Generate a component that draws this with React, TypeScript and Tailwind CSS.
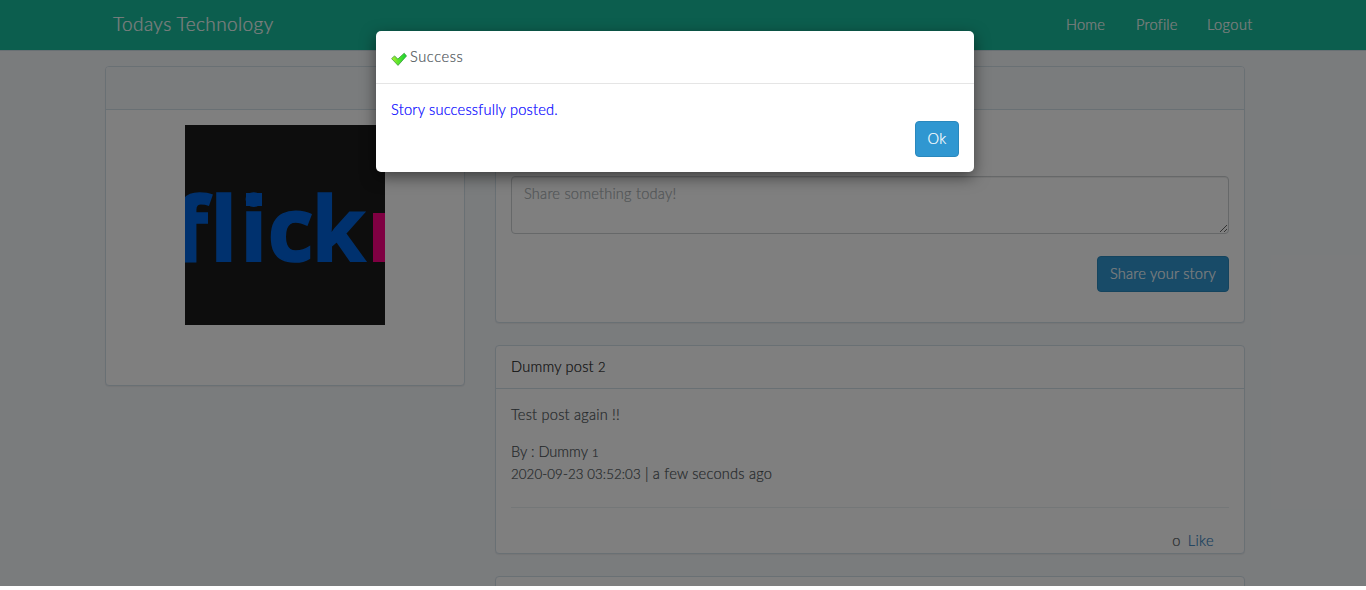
import React from "react";

function Panel({ className, children }: { className: string; children?: React.ReactNode }) {
  return (
    <section
      className={
        "box-border flex flex-col rounded-[4px] border border-[#d3e0e9] bg-white shadow-[0_1px_1px_rgba(0,0,0,0.05)] " +
        className
      }
    >
      {children}
    </section>
  );
}

function FlickrPicture() {
  return (
    <svg
      width="200"
      height="200"
      viewBox="0 0 200 200"
      className="block"
      fontFamily="'Open Sans', sans-serif"
      fontWeight="700"
      fontSize="90"
      letterSpacing="0"
      fill="#0063dc"
      stroke="#0063dc"
      strokeWidth="1.6"
    >
      <rect width="200" height="200" fill="#1b1b1b" stroke="none" />
      <text x="-12" y="136.4">f</text>
      <text x="25" y="136.4">l</text>
      <text x="55" y="136.4">i</text>
      <rect x="61" y="68" width="16" height="13" stroke="none" />
      <text x="82.5" y="136.4">c</text>
      <text x="126.5" y="136.4" textLength="54" lengthAdjust="spacingAndGlyphs">k</text>
      <rect x="188" y="88" width="12" height="49" fill="#ff0084" stroke="none" />
    </svg>
  );
}

function CheckIcon() {
  return (
    <svg width="16" height="16" viewBox="0 0 16 16" className="mt-[1px] block">
      <defs>
        <linearGradient id="tick" x1="0" y1="0" x2="1" y2="0">
          <stop offset="0" stopColor="#b4f02c" />
          <stop offset="0.4" stopColor="#62e52c" />
          <stop offset="1" stopColor="#10d530" />
        </linearGradient>
      </defs>
      <path
        d="M0.6 7.6 3.6 4.9l3.2 3.2L13.2 2.2l2.3 2.8-8.5 9.4Z"
        fill="url(#tick)"
        stroke="#3c9c3c"
        strokeWidth="0.8"
        strokeLinejoin="round"
      />
    </svg>
  );
}

export default function App() {
  return (
    <div className="relative h-[590px] w-full overflow-hidden bg-white font-['Lato',sans-serif] text-[14.6px] leading-[22px] font-light tracking-[0.22px] text-[#4c5357] [-webkit-text-stroke:0.2px]">
      <div className="h-[586px] overflow-hidden bg-[#f5f8fa]">
        <nav className="h-[51px] border-b border-[#d3e0e9] bg-[#18bc9c] text-white">
          <div className="ml-[113px] flex h-[50px] w-[1140px] items-center justify-between">
            <span className="pb-[2px] text-[19px] tracking-[0.4px]">Todays Technology</span>
            <div className="flex gap-[30px]">
              <span className="w-[40px]">Home</span>
              <span className="w-[41px]">Profile</span>
              <span className="w-[46px] tracking-[0.4px]">Logout</span>
            </div>
          </div>
        </nav>
        <div className="ml-[105px] mt-[15px] flex w-[1140px] items-start gap-[30px]">
          <Panel className="h-[320px] w-[360px]">
            <div className="h-[43px] rounded-t-[3px] border-b border-[#d3e0e9] bg-[#f5f8fa]" />
            <div className="flex justify-center pt-[15px]">
              <FlickrPicture />
            </div>
          </Panel>
          <div className="flex w-[750px] flex-col gap-[22px]">
            <Panel className="h-[257px]">
              <div className="h-[43px] shrink-0 rounded-t-[3px] border-b border-[#d3e0e9] bg-[#f5f8fa]" />
              <div className="flex flex-col items-end px-[15px] pt-[66px]">
                <textarea
                  readOnly
                  placeholder="Share something today!"
                  className="box-border block h-[58px] w-full resize-y rounded-[4px] border border-[#ccd0d2] bg-white px-[12px] py-[6px] shadow-[inset_0_1px_1px_rgba(0,0,0,0.075)] placeholder:text-[#a5acaf]"
                />
                <button className="mt-[22px] h-[36px] w-[132px] rounded-[4px] border border-[#2a88bd] bg-[#3097d1] text-white">
                  Share your story
                </button>
              </div>
            </Panel>
            <Panel className="h-[209px]">
              <div className="h-[43px] shrink-0 border-b border-[#d3e0e9] px-[15px] pt-[10px] text-[#222222]">
                Dummy post <span className="text-[13px] leading-none">2</span>
              </div>
              <div className="px-[15px] pt-[15px]">
                <p>Test post again !!</p>
                <p className="mt-[15px] tracking-normal">
                  By : Dummy <span className="text-[12px] leading-none">1</span>
                </p>
                <p className="flex h-[22px] items-baseline whitespace-pre">
                  <span className="text-[13.3px] leading-none tracking-[0.1px]">2020-09-23 03:52:03</span>
                  <span> | a few seconds ago</span>
                </p>
                <hr className="mt-[22px] border-[#e9eef0]" />
                <div className="mt-[22px] flex justify-end gap-[7px] pr-[15px]">
                  <span>o</span>
                  <span className="tracking-[0.4px] text-[#3080bd]">Like</span>
                </div>
              </div>
            </Panel>
            <Panel className="h-[120px]" />
          </div>
        </div>
      </div>
      <div className="absolute inset-x-0 top-0 flex h-[586px] items-start bg-black/50">
        <div
          role="dialog"
          className="ml-[376px] mt-[31px] flex h-[141px] w-[598px] flex-col rounded-[5px] bg-white shadow-[0_5px_15px_rgba(0,0,0,0.5)]"
        >
          <div className="flex h-[53px] gap-[3px] border-b border-[#e5e5e5] px-[15px] pt-[15px]">
            <div className="pt-[4px]">
              <CheckIcon />
            </div>
            <span className="tracking-[0.6px]">Success</span>
          </div>
          <div className="flex flex-col px-[15px] pt-[15px]">
            <p className="text-[#0000ff]">Story successfully posted.</p>
            <button className="h-[36px] w-[44px] self-end rounded-[4px] border border-[#2a88bd] bg-[#3097d1] text-white">
              Ok
            </button>
          </div>
        </div>
      </div>
    </div>
  );
}
